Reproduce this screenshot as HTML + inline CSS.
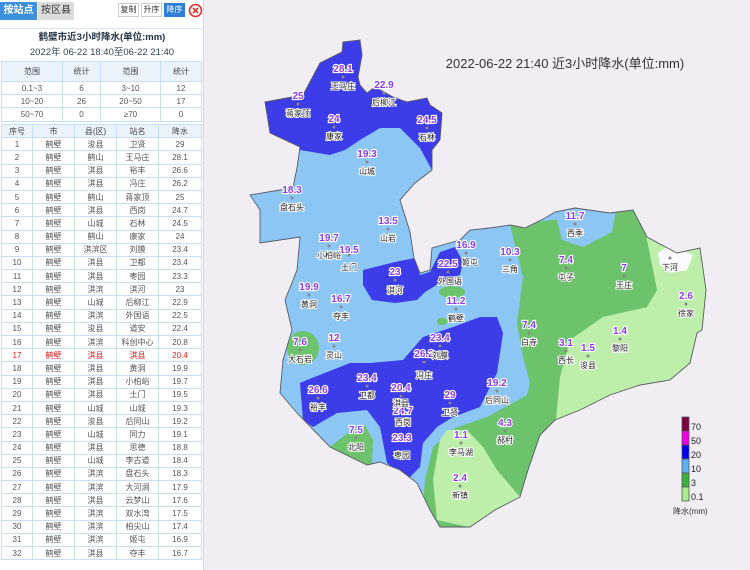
<!DOCTYPE html><html><head><meta charset="utf-8"><style>
*{margin:0;padding:0;box-sizing:border-box}
body{width:750px;height:570px;overflow:hidden;background:#f0eef3;font-family:"Liberation Sans","Noto Sans CJK SC",sans-serif;position:relative}
#lp{position:absolute;left:0;top:0;width:204px;height:570px;background:#fff;border-right:1px solid #cfd8e2}
.tab{position:absolute;top:2px;height:18px;font-size:10px;line-height:18px;text-align:center}
.btn{position:absolute;top:3px;height:14px;font-size:8px;line-height:12px;text-align:center;border:1px solid #ccc;background:#fff;color:#333}
table{border-collapse:collapse;position:absolute;left:1px;width:200px;font-size:8px;color:#555;table-layout:fixed}
td{border:1px solid #c6e0f2;text-align:center;height:13.2px;padding:0;line-height:11px;white-space:nowrap;overflow:hidden}
tr.h td{background:#eaf3fb;height:20px;color:#444}
#t2 td{height:13.2px}
.r td{color:#e02020}
svg text{font-family:"Liberation Sans","Noto Sans CJK SC",sans-serif}
.v{font-size:10px;font-weight:bold;fill:#8a3cf0;stroke:#fff;stroke-width:2.2px;paint-order:stroke;text-anchor:middle}
.n{font-size:8px;fill:#222;stroke:#fff;stroke-width:2px;paint-order:stroke;text-anchor:middle}
</style></head><body>
<div id="lp">
<div class="tab" style="left:0;width:37px;background:#3d8fe0;color:#fff;font-weight:bold">按站点</div>
<div class="tab" style="left:38px;width:36px;background:#dcdcdc;color:#333">按区县</div>
<div class="btn" style="left:118px;width:21px">复制</div>
<div class="btn" style="left:141px;width:21px">升序</div>
<div class="btn" style="left:164px;width:21px;background:#2f7fd8;color:#fff;border-color:#2f7fd8">降序</div>
<svg style="position:absolute;left:188px;top:3px" width="15" height="15"><circle cx="7.5" cy="7.5" r="6" fill="none" stroke="#e53030" stroke-width="1.6"/><path d="M5 5L10 10M10 5L5 10" stroke="#e53030" stroke-width="1.6"/></svg>
<div style="position:absolute;left:0;top:28px;width:204px;height:1px;background:#d8e6f2"></div>
<div style="position:absolute;left:0;top:29px;width:204px;text-align:center;font-size:9.5px;font-weight:bold;color:#234">鹤壁市近3小时降水(单位:mm)</div>
<div style="position:absolute;left:0;top:44px;width:204px;text-align:center;font-size:9.5px;color:#345">2022年 06-22 18:40至06-22 21:40</div>
<table style="top:61px"><colgroup><col style="width:61px"><col style="width:38px"><col style="width:60px"><col style="width:41px"></colgroup>
<tr class="h"><td>范围</td><td>统计</td><td>范围</td><td>统计</td></tr>
<tr><td>0.1~3</td><td>6</td><td>3~10</td><td>12</td></tr>
<tr><td>10~20</td><td>26</td><td>20~50</td><td>17</td></tr>
<tr><td>50~70</td><td>0</td><td>≥70</td><td>0</td></tr></table>
<table id="t2" style="top:124px"><colgroup><col style="width:31px"><col style="width:42px"><col style="width:42px"><col style="width:42px"><col style="width:43px"></colgroup>
<tr class="h"><td>序号</td><td>市</td><td>县(区)</td><td>站名</td><td>降水</td></tr>
<tr><td>1</td><td>鹤壁</td><td>浚县</td><td>卫贤</td><td>29</td></tr>
<tr><td>2</td><td>鹤壁</td><td>鹤山</td><td>王马庄</td><td>28.1</td></tr>
<tr><td>3</td><td>鹤壁</td><td>淇县</td><td>裕丰</td><td>26.6</td></tr>
<tr><td>4</td><td>鹤壁</td><td>淇县</td><td>冯庄</td><td>26.2</td></tr>
<tr><td>5</td><td>鹤壁</td><td>鹤山</td><td>蒋家顶</td><td>25</td></tr>
<tr><td>6</td><td>鹤壁</td><td>淇县</td><td>西岗</td><td>24.7</td></tr>
<tr><td>7</td><td>鹤壁</td><td>山城</td><td>石林</td><td>24.5</td></tr>
<tr><td>8</td><td>鹤壁</td><td>鹤山</td><td>康家</td><td>24</td></tr>
<tr><td>9</td><td>鹤壁</td><td>淇滨区</td><td>刘膜</td><td>23.4</td></tr>
<tr><td>10</td><td>鹤壁</td><td>淇县</td><td>卫都</td><td>23.4</td></tr>
<tr><td>11</td><td>鹤壁</td><td>淇县</td><td>枣园</td><td>23.3</td></tr>
<tr><td>12</td><td>鹤壁</td><td>淇滨</td><td>淇河</td><td>23</td></tr>
<tr><td>13</td><td>鹤壁</td><td>山城</td><td>后柳江</td><td>22.9</td></tr>
<tr><td>14</td><td>鹤壁</td><td>淇滨</td><td>外国语</td><td>22.5</td></tr>
<tr><td>15</td><td>鹤壁</td><td>浚县</td><td>道安</td><td>22.4</td></tr>
<tr><td>16</td><td>鹤壁</td><td>淇滨</td><td>科创中心</td><td>20.8</td></tr>
<tr class="r"><td>17</td><td>鹤壁</td><td>淇县</td><td>淇县</td><td>20.4</td></tr>
<tr><td>18</td><td>鹤壁</td><td>淇县</td><td>黄洞</td><td>19.9</td></tr>
<tr><td>19</td><td>鹤壁</td><td>淇县</td><td>小柏峪</td><td>19.7</td></tr>
<tr><td>20</td><td>鹤壁</td><td>淇县</td><td>土门</td><td>19.5</td></tr>
<tr><td>21</td><td>鹤壁</td><td>山城</td><td>山城</td><td>19.3</td></tr>
<tr><td>22</td><td>鹤壁</td><td>浚县</td><td>后同山</td><td>19.2</td></tr>
<tr><td>23</td><td>鹤壁</td><td>山城</td><td>同力</td><td>19.1</td></tr>
<tr><td>24</td><td>鹤壁</td><td>淇县</td><td>思德</td><td>18.8</td></tr>
<tr><td>25</td><td>鹤壁</td><td>山城</td><td>李古道</td><td>18.4</td></tr>
<tr><td>26</td><td>鹤壁</td><td>淇滨</td><td>盘石头</td><td>18.3</td></tr>
<tr><td>27</td><td>鹤壁</td><td>淇滨</td><td>大河涧</td><td>17.9</td></tr>
<tr><td>28</td><td>鹤壁</td><td>淇县</td><td>云梦山</td><td>17.6</td></tr>
<tr><td>29</td><td>鹤壁</td><td>淇滨</td><td>双水湾</td><td>17.5</td></tr>
<tr><td>30</td><td>鹤壁</td><td>淇滨</td><td>柏尖山</td><td>17.4</td></tr>
<tr><td>31</td><td>鹤壁</td><td>淇滨</td><td>姬屯</td><td>16.9</td></tr>
<tr><td>32</td><td>鹤壁</td><td>淇县</td><td>夺丰</td><td>16.7</td></tr>
</table>
</div>
<svg style="position:absolute;left:0;top:0" width="750" height="570">
<defs><clipPath id="c"><polygon id="o" points="265,102 303,95 320,63 342,52 343,42 360,40 362,55 358,77 360,85 367,93 375,87 393,97 407,102 427,98 430,105 442,113 440,140 432,150 432,170 415,183 400,200 410,232 414,258 420,273 430,270 432,248 460,240 470,230 490,228 510,225 525,228 545,218 555,212 575,208 610,213 633,210 647,237 677,253 700,248 706,290 702,330 697,333 690,363 670,380 640,385 610,395 580,410 555,420 540,435 528,470 520,497 495,510 470,527 440,527 430,510 417,483 400,470 380,462 367,465 330,447 297,413 280,393 283,360 292,330 285,300 297,270 300,237 280,240 260,243 260,210 250,195 280,190 293,187 297,168 300,147 270,133"/></clipPath></defs>
<g clip-path="url(#c)">
<rect x="240" y="30" width="480" height="510" fill="#8cc6f5"/>
<polygon fill="#3c3ce8" points="240,30 460,30 460,190 433,172 420,148 400,128 380,128 360,140 345,150 330,155 300,150 240,150"/>
<polygon fill="#3c3ce8" points="363,270 395,262 415,258 420,275 430,272 440,252 455,247 463,262 460,275 445,280 425,292 417,300 395,303 372,300 363,285"/>
<polygon fill="#3c3ce8" points="300,383 307,380 350,363 370,363 403,360 423,337 453,327 480,317 497,317 503,333 497,373 480,407 453,417 437,427 423,443 420,467 407,480 387,463 380,427 367,410 337,413 313,427 303,420"/>
<polygon fill="#6cc36c" points="510,225 720,200 720,540 420,540 425,480 433,447 455,428 487,417 527,395 530,383 523,357 517,323 523,277"/>
<polygon fill="#8cc6f5" points="553,205 617,205 612,232 583,247 562,240"/>
<polygon fill="#bdeeaa" points="640,205 720,200 720,420 555,430 560,377 570,340 603,317 647,307 657,290"/>
<polygon fill="#fbfbfd" points="658,253 670,245 693,255 687,270 670,273 660,265"/>
<polygon fill="#bdeeaa" points="447,430 467,430 483,447 497,470 520,497 507,513 473,528 437,520 433,480 440,440"/>
<ellipse cx="303" cy="348" rx="16" ry="17" fill="#6cc36c"/>
<polygon fill="#6cc36c" points="330,447 345,435 365,425 373,440 372,465 340,460"/>
<ellipse cx="452" cy="292" rx="13" ry="6" fill="#6cc36c"/>
<rect x="437" y="318" width="10" height="7" rx="3" fill="#6cc36c"/>
</g>
<use href="#o" fill="none" stroke="#5a5a66" stroke-width="0.9"/>
<text x="565" y="68" font-size="13" fill="#333" text-anchor="middle">2022-06-22 21:40 近3小时降水(单位:mm)</text>
<g fill="#888">
<circle cx="343" cy="77" r="1.5"/><circle cx="298" cy="104" r="1.5"/><circle cx="384" cy="93" r="1.5"/><circle cx="334" cy="127" r="1.5"/><circle cx="427" cy="128" r="1.5"/><circle cx="367" cy="162" r="1.5"/><circle cx="292" cy="198" r="1.5"/><circle cx="388" cy="229" r="1.5"/><circle cx="329" cy="246" r="1.5"/><circle cx="349" cy="255" r="1.5"/><circle cx="466" cy="253" r="1.5"/><circle cx="510" cy="260" r="1.5"/><circle cx="448" cy="272" r="1.5"/><circle cx="395" cy="280" r="1.5"/><circle cx="575" cy="224" r="1.5"/><circle cx="566" cy="268" r="1.5"/><circle cx="624" cy="276" r="1.5"/><circle cx="670" cy="258" r="1.5"/><circle cx="309" cy="295" r="1.5"/><circle cx="341" cy="307" r="1.5"/><circle cx="456" cy="309" r="1.5"/><circle cx="686" cy="304" r="1.5"/><circle cx="529" cy="333" r="1.5"/><circle cx="334" cy="346" r="1.5"/><circle cx="300" cy="350" r="1.5"/><circle cx="440" cy="346" r="1.5"/><circle cx="620" cy="339" r="1.5"/><circle cx="566" cy="351" r="1.5"/><circle cx="588" cy="356" r="1.5"/><circle cx="424" cy="362" r="1.5"/><circle cx="367" cy="386" r="1.5"/><circle cx="401" cy="396" r="1.5"/><circle cx="450" cy="403" r="1.5"/><circle cx="318" cy="398" r="1.5"/><circle cx="497" cy="391" r="1.5"/><circle cx="403" cy="412" r="1.5"/><circle cx="505" cy="431" r="1.5"/><circle cx="402" cy="438" r="1.5"/><circle cx="356" cy="438" r="1.5"/><circle cx="461" cy="443" r="1.5"/><circle cx="460" cy="486" r="1.5"/>
</g>
<g class="v">
<text x="343" y="72">28.1</text><text x="298" y="99">25</text><text x="384" y="88">22.9</text><text x="334" y="122">24</text><text x="427" y="123">24.5</text><text x="367" y="157">19.3</text><text x="292" y="193">18.3</text><text x="388" y="224">13.5</text><text x="329" y="241">19.7</text><text x="349" y="253">19.5</text><text x="466" y="248">16.9</text><text x="510" y="255">10.3</text><text x="448" y="267">22.5</text><text x="395" y="275">23</text><text x="575" y="219">11.7</text><text x="566" y="263">7.4</text><text x="624" y="271">7</text><text x="309" y="290">19.9</text><text x="341" y="302">16.7</text><text x="456" y="304">11.2</text><text x="686" y="299">2.6</text><text x="529" y="328">7.4</text><text x="334" y="341">12</text><text x="300" y="345">7.6</text><text x="440" y="341">23.4</text><text x="620" y="334">1.4</text><text x="566" y="346">3.1</text><text x="588" y="351">1.5</text><text x="424" y="357">26.2</text><text x="367" y="381">23.4</text><text x="401" y="391">20.4</text><text x="450" y="398">29</text><text x="318" y="393">26.6</text><text x="497" y="386">19.2</text><text x="403" y="414">24.7</text><text x="505" y="426">4.3</text><text x="402" y="441">23.3</text><text x="356" y="433">7.5</text><text x="461" y="438">1.1</text><text x="460" y="481">2.4</text>
</g>
<g class="n">
<text x="343" y="89">王马庄</text><text x="298" y="116">蒋家顶</text><text x="384" y="105">后柳江</text><text x="334" y="139">康家</text><text x="427" y="140">石林</text><text x="367" y="174">山城</text><text x="292" y="210">盘石头</text><text x="388" y="241">山岩</text><text x="329" y="258">小柏峪</text><text x="349" y="270">土门</text><text x="470" y="265">姬屯</text><text x="510" y="272">三角</text><text x="450" y="284">外国语</text><text x="395" y="293">淇河</text><text x="575" y="236">西季</text><text x="566" y="280">屯子</text><text x="624" y="288">王庄</text><text x="670" y="270">下河</text><text x="309" y="307">黄洞</text><text x="341" y="319">夺丰</text><text x="456" y="321">鹤壁</text><text x="686" y="316">徐家</text><text x="529" y="345">白寺</text><text x="334" y="358">灵山</text><text x="300" y="362">大石岩</text><text x="440" y="358">刘膜</text><text x="620" y="351">黎阳</text><text x="566" y="363">西长</text><text x="588" y="368">浚县</text><text x="424" y="378">冯庄</text><text x="367" y="398">卫都</text><text x="401" y="406">淇县</text><text x="450" y="415">卫贤</text><text x="318" y="410">裕丰</text><text x="497" y="403">后同山</text><text x="403" y="425">西岗</text><text x="505" y="443">郝村</text><text x="402" y="458">枣园</text><text x="356" y="450">北阳</text><text x="461" y="455">李马湖</text><text x="460" y="498">新镇</text>
</g>
<g stroke="#555" stroke-width="0.8">
<rect x="682" y="417" width="7" height="14" fill="#7a0040"/>
<rect x="682" y="431" width="7" height="14" fill="#f000e0"/>
<rect x="682" y="445" width="7" height="14" fill="#0000f0"/>
<rect x="682" y="459" width="7" height="14" fill="#5eb0f5"/>
<rect x="682" y="473" width="7" height="14" fill="#3cb03c"/>
<rect x="682" y="487" width="7" height="14" fill="#a8ee90"/>
</g>
<g font-size="9" fill="#222"><text x="691" y="430">70</text><text x="691" y="444">50</text><text x="691" y="458">20</text><text x="691" y="472">10</text><text x="691" y="486">3</text><text x="691" y="500">0.1</text></g>
<text x="673" y="514" font-size="8" fill="#333">降水(mm)</text>
</svg>
</body></html>
